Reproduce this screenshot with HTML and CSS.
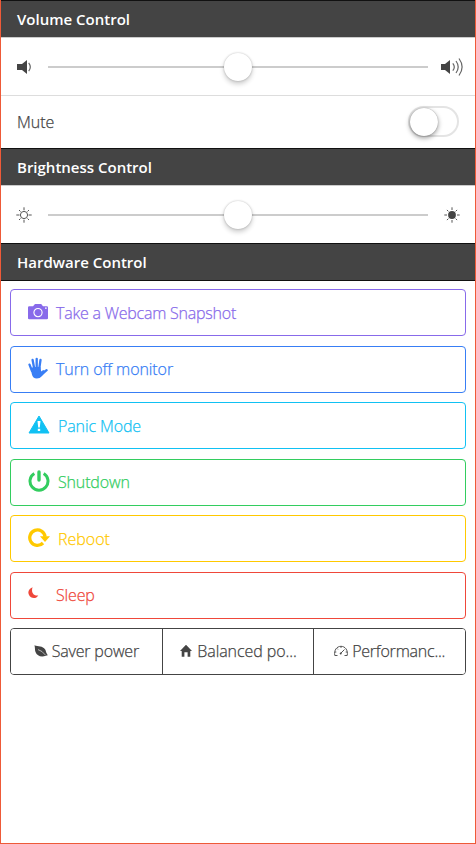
FILE: index.html
```html
<!DOCTYPE html>
<html lang="en">
<head>
<meta charset="utf-8">
<title>Remote Control</title>
<link rel="stylesheet" href="styles.css">
</head>
<body>
<main class="page">
  <h2 class="divider"><span class="t-volume">Volume Control</span></h2>
  <div class="range">
    <svg class="icon-side" viewBox="0 0 24 24"><path fill="#444" d="M5 9h5l5-4v14l-5-4H5z"/><path fill="none" stroke="#666" stroke-width="1.2" d="M16.700 7.800q3.200 4.200 0 8.400"/></svg>
    <div class="track"><span class="knob"></span></div>
    <svg class="icon-side" viewBox="0 0 24 24"><path fill="#444" d="M1 9h4l5-4v14l-5-4H1z"/><path fill="none" stroke="#666" stroke-width="1.2" d="M12.800 8.300q3 3.700 0 7.400M16 6q4.400 6 0 12M19 3.500q6.200 8.500 0 17"/></svg>
  </div>
  <div class="mute"><span class="label t-mute">Mute</span><span class="toggle"></span></div>
  <h2 class="divider"><span class="t-bright">Brightness Control</span></h2>
  <div class="range">
    <svg class="icon-side" viewBox="0 0 24 24"><circle cx="12" cy="12" r="3.600" fill="none" stroke="#555"/><path stroke="#555" fill="none" d="M12 4.300v3M12 16.700v3M4.300 12h3.200M16.500 12h3.200M7 7l1.500 1.500M15.500 15.500L17 17M7 17l1.500-1.500M15.500 8.500L17 7"/></svg>
    <div class="track"><span class="knob"></span></div>
    <svg class="icon-side" viewBox="0 0 24 24"><circle cx="12" cy="12" r="3.900" fill="#444"/><path stroke="#555" fill="none" d="M12 4.300v2.700M12 17v2.700M4.300 12H7M17 12h2.700M6.900 6.900l1.500 1.500M15.600 15.600l1.500 1.500M6.900 17.100l1.500-1.500M15.600 8.400l1.500-1.500"/></svg>
  </div>
  <h2 class="divider last"><span class="t-hard">Hardware Control</span></h2>
  <section class="actions">
    <button class="btn royal"><svg class="icon w20" viewBox="0 0 20 22"><path fill="currentColor" fill-rule="evenodd" d="M1.200 4.200H5L7 2h6.200L15 4.200h3.800q1.200 0 1.200 1.200V16.200q0 1-1.200 1H1.200Q0 17.200 0 16.200V5.400Q0 4.200 1.200 4.200zM17 5.400v1.300h1.700V5.400z"/><circle cx="10" cy="10.600" r="4.100" fill="none" stroke="#fff" stroke-width="1.100"/></svg><span class="label t-snap">Take a Webcam Snapshot</span></button>
    <button class="btn blue"><svg class="icon w20" viewBox="0 0 20 22"><g fill="none" stroke="currentColor" stroke-width="2.300" stroke-linecap="round"><path d="M1.500 7.600L4 14M4.600 3l1.700 9M8.700 1.800V12M12.500 3L11.200 12M18.600 13.200L13.500 17.500"/></g><path fill="currentColor" d="M2.800 11.500l2.400-1.500h7.200l.8 4.500 2-1.500 2.600 1.200-4.300 5.300Q12 21.500 8.800 21.500 4.800 21.500 3.800 17z"/></svg><span class="label t-mon">Turn off monitor</span></button>
    <button class="btn cyan"><svg class="icon w22" viewBox="0 0 22 22"><path fill="currentColor" stroke="currentColor" stroke-linejoin="round" d="M11 3L21 20H1z"/><path fill="#fff" d="M9.500 8h3l-.7 6.500h-1.600zM9.800 15.800h2.400v2.200H9.800z"/></svg><span class="label t-panic">Panic Mode</span></button>
    <button class="btn green"><svg class="icon w22" viewBox="0 0 22 22"><path fill="none" stroke="currentColor" stroke-width="3" d="M6.300 3.500A9 9 0 1 0 15.700 3.500"/><path fill="none" stroke="currentColor" stroke-width="3.400" stroke-linecap="round" d="M11 2v8"/></svg><span class="label t-shut">Shutdown</span></button>
    <button class="btn yellow"><svg class="icon w22" viewBox="0 0 22 22"><path fill="none" stroke="currentColor" stroke-width="3.300" d="M15 17A7.700 7.700 0 1 1 17.100 10.800"/><path fill="currentColor" d="M12 10.300h10L17 16z"/></svg><span class="label t-reboot">Reboot</span></button>
    <button class="btn red"><svg class="icon w20" viewBox="0 0 20 22"><path fill="currentColor" d="M4.600 4.300C.8 6-.5 9 .9 11.800c1.800 4 7.300 4.400 9.400.7C5.800 13.300 2.700 9.200 4.600 4.300z"/></svg><span class="label t-sleep">Sleep</span></button>
    <div class="bar">
      <button class="seg"><svg class="icon-small" viewBox="0 0 14 14"><path fill="currentColor" d="M.5 1.200C4 3 8.700 1.300 11.200 5.600c1 1.700.7 3.600 2.600 5.600l-2 .5C7.500 13.500 3 12 1.500 8 .7 5.800 1.200 4 .5 1.200z"/><path fill="none" stroke="#fff" stroke-width=".6" d="M4 5.600q4 1 7.500 5.500"/></svg><span class="label t-saver">Saver power</span></button>
      <button class="seg"><svg class="icon-small" viewBox="0 0 14 14"><path fill="currentColor" d="M7 .7l6 6.300h-1.700v5.700H8.600V8.300H5.400v4.400H2.700V7H1z"/></svg><span class="label t-bal">Balanced po...</span></button>
      <button class="seg"><svg class="icon-small" viewBox="0 0 14 14"><path fill="none" stroke="currentColor" stroke-width=".9" d="M3.500 11.500H.8C-.3 6 3 2.300 7 2.300S14.300 6 13.200 11.500H10.500M7 2.500v1.400M2.900 4.400l1 1M.8 8h1.500M11.700 8h1.500M6.500 9.500L10.500 5.500"/><circle cx="6.700" cy="9.400" r="1" fill="currentColor"/></svg><span class="label t-perf">Performanc...</span></button>
    </div>
  </section>
</main>
</body>
</html>
```
FILE: styles.css
```css
* { box-sizing: border-box; }
body { margin: 0; background: #fff; color: #444; font-family: "Segoe UI", "Open Sans", sans-serif; font-size: 16px; font-weight: 300; }
.page { height: 844px; padding: 0; border: 1px solid #ee5a38; border-top: 0; }
.divider { height: 38px; margin: 0; padding: 0 16px; background: #444; border-top: 1px solid #111; border-bottom: 1px solid #ccc; color: #fff; font-size: 15px; font-weight: 600; line-height: 36px; }
.divider.last { border-bottom-color: #111; }
.range { height: 57px; padding: 0 11px; display: flex; align-items: center; gap: 12px; }
.icon-side { width: 24px; height: 24px; flex: none; }
.track { flex: 1; height: 2px; background: #ccc; display: flex; align-items: center; justify-content: center; }
.knob { width: 28px; height: 28px; flex: none; border-radius: 50%; background: #fff; box-shadow: 0 0 2px rgba(0,0,0,.25), 0 3px 5px rgba(0,0,0,.2); }
.mute { height: 53px; padding: 0 16px; border-top: 1px solid #ddd; display: flex; align-items: center; justify-content: space-between; }
.toggle { width: 51px; height: 31px; margin-top: -1px; border: 2px solid #e4e4e4; border-radius: 16px; display: flex; align-items: center; }
.toggle::before { content: ""; width: 28px; height: 28px; margin-left: -1px; border-radius: 50%; background: #fff; box-shadow: 0 0 1px rgba(0,0,0,.4), 0 2px 5px rgba(0,0,0,.4); }
.toggle::before { margin-left: 0; }
.actions { padding: 8px 9px; display: flex; flex-direction: column; gap: 9.5px; }
button { font: inherit; color: inherit; background: #fff; margin: 0; padding: 0; }
.btn { height: 47px; padding: 0 17px; border: 1px solid currentColor; border-radius: 4px; display: flex; align-items: center; gap: 9px; text-align: left; }
.icon { height: 22px; flex: none; margin-top: -3px; }
.royal .icon { margin-top: 0; }
.w20 { width: 20px; }
.w22 { width: 22px; }
.icon + .label { margin-left: -1px; }
.royal { color: #886aea; }
.blue { color: #387ef5; }
.cyan { color: #11c1f3; }
.green { color: #33cd5f; }
.yellow { color: #ffc900; }
.red { color: #ef473a; }
.bar { height: 47px; border: 1px solid #444; border-radius: 4px; display: flex; overflow: hidden; }
.seg { flex: 1 1 0; min-width: 0; border: 0; border-left: 1px solid #444; display: flex; align-items: center; justify-content: center; gap: 4px; }
.seg:first-child { border-left: 0; }
.seg .label { margin-top: -2px; }
.icon-small { width: 14px; height: 14px; flex: none; margin-top: -1px; }
.label { white-space: nowrap; -webkit-text-stroke: 0.25px currentColor; }
.t-mute { letter-spacing: 0; }
.t-snap { letter-spacing: -0.22px; }
.t-mon { letter-spacing: -0.08px; }
.t-panic { letter-spacing: -0.12px; }
.t-shut { letter-spacing: -0.15px; }
.t-reboot { letter-spacing: 0; }
.t-sleep { letter-spacing: -0.15px; }
.t-saver { letter-spacing: -0.18px; }
.t-bal { letter-spacing: -0.08px; }
.t-perf { letter-spacing: -0.22px; }
```
